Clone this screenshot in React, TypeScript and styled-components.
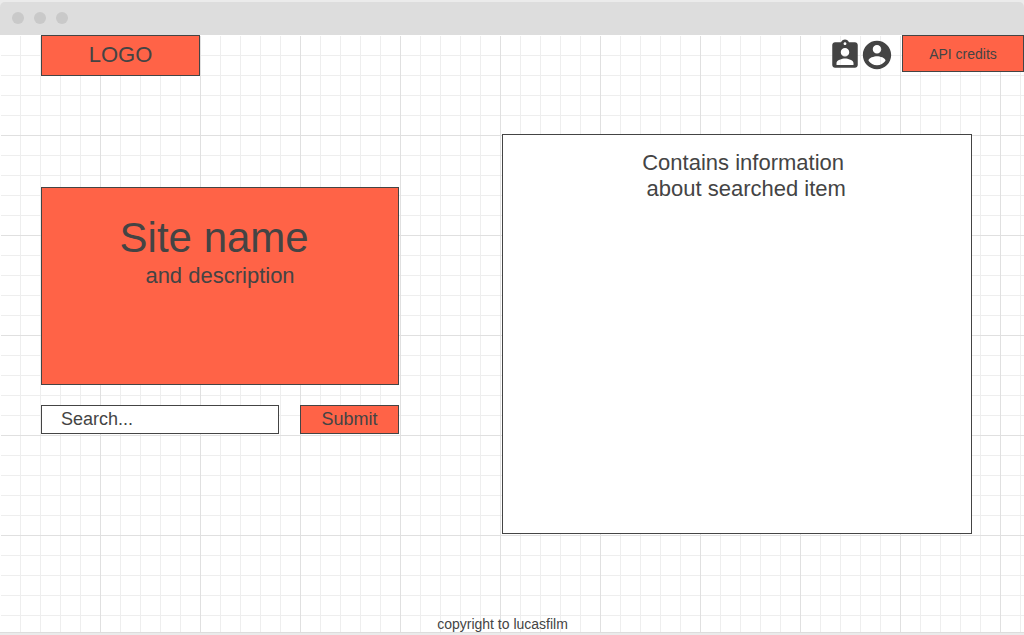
import React from "react";
import styled, { createGlobalStyle } from "styled-components";

const ink = "#444444";
const coral = "#ff6347";

const GlobalStyle = createGlobalStyle`
  *, *::before, *::after { box-sizing: border-box; }
  body {
    margin: 0;
    background: #ebebeb;
    color: ${ink};
    font-family: "Liberation Sans", Arial, sans-serif;
  }
  button, input { font-family: inherit; color: inherit; }
`;

const BrowserWindow = styled.div`
  min-height: 100vh;
  padding: 2px 0;
  display: flex;
  flex-direction: column;
`;

const TitleBar = styled.div`
  height: 33px;
  padding: 0 12px 2px;
  display: flex;
  align-items: center;
  gap: 10px;
  background: #dddddd;
  border-radius: 5px 5px 0 0;
`;

const WindowDot = styled.span`
  width: 12px;
  height: 12px;
  border-radius: 50%;
  background: #c9c9c9;
`;

const Page = styled.div`
  flex: 1;
  display: flex;
  flex-direction: column;
  border-bottom: 1px solid #dddddd;
  background:
    linear-gradient(#ffffff, #ffffff) 0 0 / 100% 1px no-repeat,
    linear-gradient(#ffffff, #ffffff) 0 0 / 1px 100% no-repeat,
    linear-gradient(#e0e0e0 1px, transparent 1px) 0 0 / 100px 100px,
    linear-gradient(90deg, #e0e0e0 1px, transparent 1px) 0 0 / 100px 100px,
    linear-gradient(#eeeeee 1px, transparent 1px) 0 0 / 20px 20px,
    linear-gradient(90deg, #eeeeee 1px, transparent 1px) 0 0 / 20px 20px,
    #ffffff;
`;

const Header = styled.header`
  padding-left: 41px;
  display: flex;
  align-items: flex-start;
  justify-content: space-between;
`;

const Logo = styled.a`
  width: 159px;
  height: 41px;
  padding-bottom: 2px;
  display: flex;
  align-items: center;
  justify-content: center;
  border: 1px solid ${ink};
  background: ${coral};
  color: inherit;
  font-size: 22px;
  text-decoration: none;
`;

const Actions = styled.nav`
  display: flex;
  align-items: flex-start;
`;

const IconGroup = styled.div`
  display: flex;
  margin-right: 9px;
  padding-top: 3px;
`;

const IconButton = styled.button`
  width: 32px;
  height: 34px;
  padding: 0;
  display: flex;
  justify-content: center;
  border: 0;
  background: transparent;
  cursor: pointer;

  svg {
    flex: none;
    width: 34px;
    height: 34px;
    fill: currentColor;
  }
`;

const Button = styled.button<{ $width: number; $height: number; $size: number }>`
  flex: none;
  width: ${(p) => p.$width}px;
  height: ${(p) => p.$height}px;
  padding: 0;
  border: 1px solid ${ink};
  background: ${coral};
  font-size: ${(p) => p.$size}px;
  cursor: pointer;
`;

const Main = styled.main`
  flex: 1;
  padding: 58px 52px 20px 41px;
  display: grid;
  grid-template-columns: minmax(0, 358fr) minmax(0, 470fr);
  align-items: start;
  gap: 103px;
`;

const Intro = styled.section`
  padding-top: 53px;
  display: flex;
  flex-direction: column;
  gap: 20px;
`;

const Hero = styled.div`
  min-height: 198px;
  padding-top: 26px;
  border: 1px solid ${ink};
  background: ${coral};
  text-align: center;
  white-space: pre;
`;

const SiteName = styled.h1`
  margin: 0 0 1px;
  font-size: 42px;
  font-weight: 400;
  line-height: 48px;
`;

const Copy = styled.p`
  margin: 0;
  font-size: 22px;
  line-height: 26px;
`;

const SearchForm = styled.form`
  display: flex;
  gap: 21px;
`;

const SearchInput = styled.input`
  flex: 1;
  min-width: 0;
  height: 29px;
  padding: 0 19px;
  border: 1px solid ${ink};
  border-radius: 0;
  background: #ffffff;
  font-size: 18px;

  &::placeholder { color: ${ink}; opacity: 1; }
`;

const ResultPanel = styled.section`
  min-height: 400px;
  padding-top: 15px;
  border: 1px solid ${ink};
  background: #ffffff;
  text-align: center;
  white-space: pre;
`;

const Footer = styled.footer`
  padding-right: 19px;
  font-size: 14px;
  line-height: 16px;
  text-align: center;
`;

export default function App() {
  return (
    <>
      <GlobalStyle />
      <BrowserWindow>
        <TitleBar>
          <WindowDot />
          <WindowDot />
          <WindowDot />
        </TitleBar>
        <Page>
          <Header>
            <Logo href="#">LOGO</Logo>
            <Actions>
              <IconGroup>
                <IconButton type="button" aria-label="Assignments">
                  <svg viewBox="0 0 24 24" aria-hidden="true">
                    <path d="M19 3h-4.18C14.4 1.84 13.3 1 12 1c-1.3 0-2.4.84-2.82 2H5c-1.1 0-2 .9-2 2v14c0 1.1.9 2 2 2h14c1.1 0 2-.9 2-2V5c0-1.1-.9-2-2-2zm-7 0c.55 0 1 .45 1 1s-.45 1-1 1-1-.45-1-1 .45-1 1-1zm0 4c1.66 0 3 1.34 3 3s-1.34 3-3 3-3-1.34-3-3 1.34-3 3-3zm6 12H6v-1.4c0-2 4-3.1 6-3.1s6 1.1 6 3.1V19z" />
                  </svg>
                </IconButton>
                <IconButton type="button" aria-label="Account">
                  <svg viewBox="0 0 24 24" aria-hidden="true">
                    <path d="M12 2C6.48 2 2 6.48 2 12s4.48 10 10 10 10-4.48 10-10S17.52 2 12 2zm0 3c1.66 0 3 1.34 3 3s-1.34 3-3 3-3-1.34-3-3 1.34-3 3-3zm0 14.2c-2.5 0-4.71-1.28-6-3.22.03-1.99 4-3.08 6-3.08 1.99 0 5.97 1.09 6 3.08-1.29 1.94-3.5 3.22-6 3.22z" />
                  </svg>
                </IconButton>
              </IconGroup>
              <Button type="button" $width={122} $height={37} $size={14}>
                API credits
              </Button>
            </Actions>
          </Header>
          <Main>
            <Intro>
              <Hero>
                <SiteName>{"Site name "}</SiteName>
                <Copy>and description</Copy>
              </Hero>
              <SearchForm onSubmit={(event) => event.preventDefault()}>
                <SearchInput type="text" aria-label="Search" placeholder="Search..." />
                <Button type="submit" $width={99} $height={29} $size={18}>
                  Submit
                </Button>
              </SearchForm>
            </Intro>
            <ResultPanel>
              <Copy>{"  Contains information\n   about searched item"}</Copy>
            </ResultPanel>
          </Main>
          <Footer>copyright to lucasfilm</Footer>
        </Page>
      </BrowserWindow>
    </>
  );
}
